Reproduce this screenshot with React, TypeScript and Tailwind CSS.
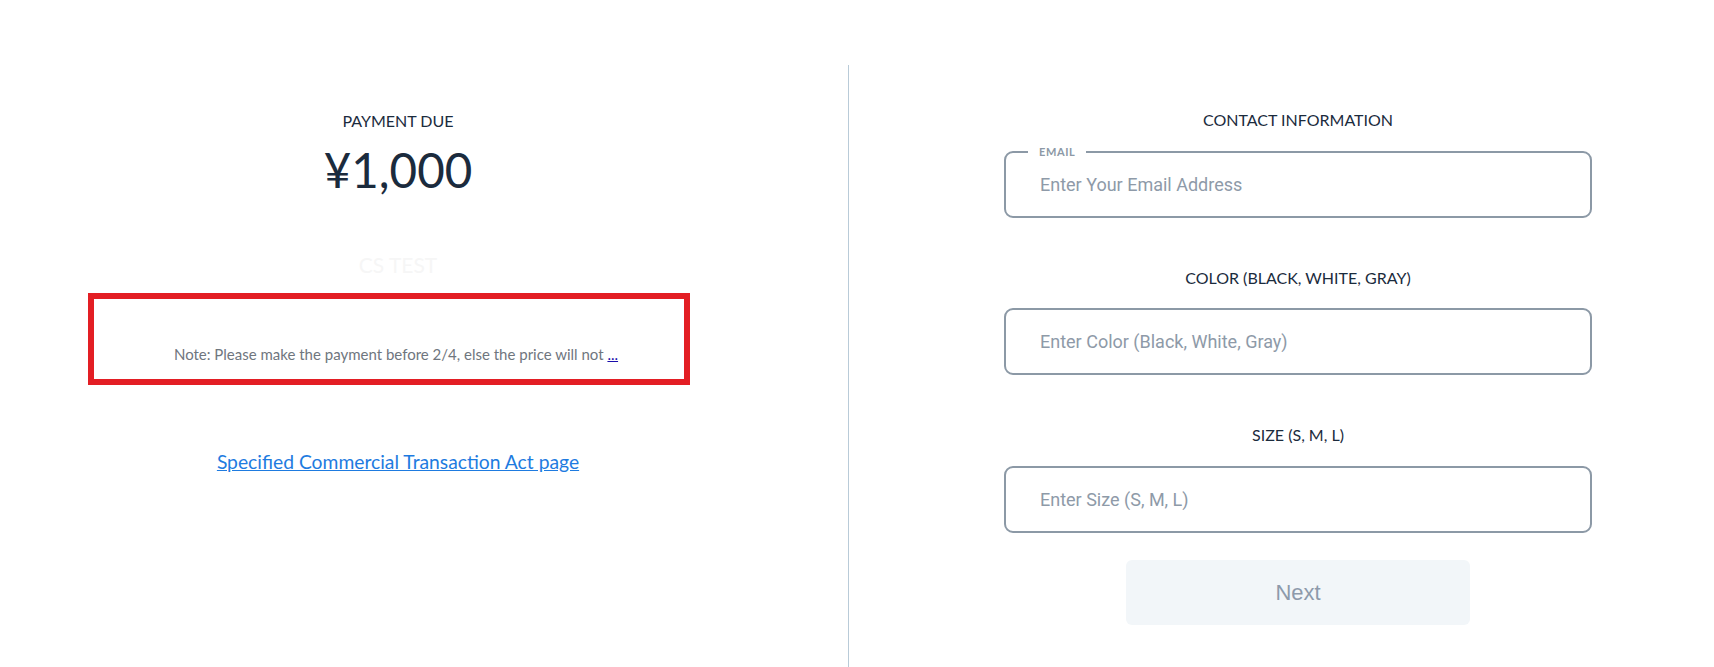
import React from "react";

const heading = "font-['Lato','Noto_Sans',sans-serif]";

function OutlinedInput({ label, placeholder }: { label?: string; placeholder: string }) {
  return (
    <div className="relative w-[588px] h-[67px] rounded-[9px] border-2 border-[#8c99a6] flex items-center pl-[34px]">
      {label && (
        <span className="absolute -top-[9px] left-[22px] bg-white px-[11px] text-[11px] leading-[16px] font-bold tracking-[0.6px] text-[#8c99a6] font-['Lato','Noto_Sans',sans-serif]">
          {label}
        </span>
      )}
      <input
        className="w-full bg-transparent outline-none text-[18px] font-['Roboto',sans-serif] text-[#1b2b3d] placeholder:text-[#8e9aa8]"
        placeholder={placeholder}
      />
    </div>
  );
}

export default function App() {
  return (
    <div className="w-[1714px] h-[667px] bg-white flex overflow-hidden">
      {/* payment summary */}
      <div className="w-[848px] pr-[52px] pt-[109px] flex flex-col items-center">
        <div className={`${heading} text-[16px] leading-[24px] text-[#1b2b3d]`}>PAYMENT DUE</div>
        <div className={`${heading} mt-[7px] text-[47.5px] leading-[60px] text-[#1b2b3d]`}>¥1,000</div>
        <div className={`${heading} mt-[51px] text-[21px] leading-[28px] text-[#f6f6f6]`}>CS TEST</div>
        <div className="mt-[14px] w-[602px] h-[92px] border-[6px] border-[#e31e24] flex flex-col items-center pt-[45px] pl-[14px] -translate-x-[9px]">
          <p className={`${heading} text-[15px] leading-[20px] text-[#6f767e]`}>
            Note: Please make the payment before 2/4, else the price will not{" "}
            <a href="#" className="text-[#1a0dab] underline">...</a>
          </p>
        </div>
        <a href="#" className={`${heading} mt-[66px] text-[19.3px] leading-[22px] text-[#1e7be0] underline`}>
          Specified Commercial Transaction Act page
        </a>
      </div>

      {/* divider */}
      <div className="mt-[65px] w-px bg-[#b9cbd8]" />

      {/* contact form */}
      <div className="flex-1 pl-[33px] pt-[108px] flex flex-col items-center">
        <div className={`${heading} text-[16px] leading-[24px] text-[#1b2b3d]`}>CONTACT INFORMATION</div>
        <div className="mt-[19px]">
          <OutlinedInput label="EMAIL" placeholder="Enter Your Email Address" />
        </div>
        <div className={`${heading} mt-[48px] text-[16px] leading-[24px] text-[#1b2b3d]`}>COLOR (BLACK, WHITE, GRAY)</div>
        <div className="mt-[18px]">
          <OutlinedInput placeholder="Enter Color (Black, White, Gray)" />
        </div>
        <div className={`${heading} mt-[48px] text-[16px] leading-[24px] text-[#1b2b3d]`}>SIZE (S, M, L)</div>
        <div className="mt-[19px]">
          <OutlinedInput placeholder="Enter Size (S, M, L)" />
        </div>
        <button className="mt-[27px] w-[344px] h-[65px] rounded-[6px] bg-[#f2f6f9] text-[22px] text-[#8d9aab] font-['Liberation_Sans',Arial,sans-serif]">
          Next
        </button>
      </div>
    </div>
  );
}
